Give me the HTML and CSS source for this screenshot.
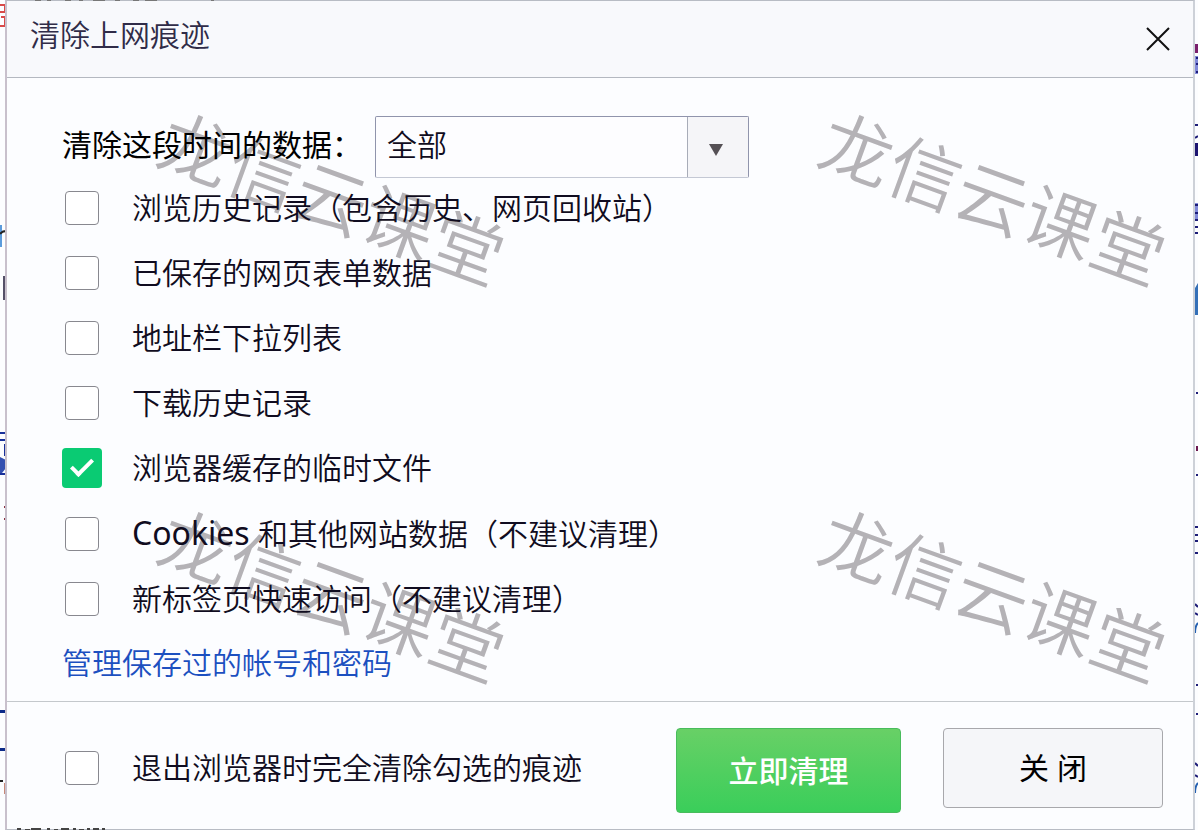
FILE: index.html
```html
<!doctype html>
<html lang="zh-CN">
  <head>
    <meta charset="UTF-8" />
    <meta name="viewport" content="width=device-width, initial-scale=1.0" />
    <title>清除上网痕迹</title>
    <link rel="stylesheet" href="styles.css" />
  </head>
  <body>
    <!-- 对话框后面露出的页面边缘 -->
    <svg class="edge edge-left" width="6" height="830" viewBox="0 0 6 830" aria-hidden="true">
      <path d="M0 5h5M5 5v7M0 12h5M1 17h4v9H0" fill="none" stroke="#d94a4a" stroke-width="2" />
      <path d="M0 225h2v22H0z" fill="#5b9bdc" />
      <path d="M0 234q2-3 6-3" fill="none" stroke="#222" stroke-width="2" />
      <path d="M3 276h2v24H3z" fill="#555068" />
      <path d="M0 433h6M0 440h6M5 444v12M0 474h6" fill="none" stroke="#18309a" stroke-width="2" />
      <path d="M0 457l6 3v8l-4 5H0z" fill="#3450b0" />
      <path d="M4 506h2v2H4zM4 518h2v2H4z" fill="#8a3040" />
      <path d="M0 710h6v3H0zM0 748h6v3H0z" fill="#0c2a88" />
      <path d="M0 780h3v2H0z" fill="#222" />
      <path d="M4 783h2v11H4z" fill="#c88878" />
    </svg>

    <main class="dialog" role="dialog" aria-labelledby="title">
      <header class="dialog-header">
        <h1 id="title">清除上网痕迹</h1>
        <button class="close-btn" type="button" aria-label="关闭">
          <svg width="24" height="24" viewBox="0 0 24 24">
            <path d="M1 1L23 23M23 1L1 23" fill="none" stroke="#111" stroke-width="2" />
          </svg>
        </button>
      </header>

      <form class="dialog-body">
        <div class="range">
          <label for="range">清除这段时间的数据：</label>
          <div class="select-box">
            <select id="range">
              <option>全部</option>
            </select>
            <span class="select-arrow">
              <svg width="14" height="12" viewBox="0 0 14 12">
                <path d="M0 0H14L7 12z" fill="#555055" />
              </svg>
            </span>
          </div>
        </div>

        <div class="options">
          <label class="check"><input type="checkbox" />浏览历史记录（包含历史、网页回收站）</label>
          <label class="check"><input type="checkbox" />已保存的网页表单数据</label>
          <label class="check"><input type="checkbox" />地址栏下拉列表</label>
          <label class="check"><input type="checkbox" />下载历史记录</label>
          <label class="check"><input type="checkbox" checked />浏览器缓存的临时文件</label>
          <label class="check"><input type="checkbox" /><span><span class="latin">Cookies </span>和其他网站数据（不建议清理）</span></label>
          <label class="check"><input type="checkbox" />新标签页快速访问（不建议清理）</label>
        </div>

        <a class="link" href="#">管理保存过的帐号和密码</a>
      </form>

      <footer class="dialog-footer">
        <label class="check"><input type="checkbox" />退出浏览器时完全清除勾选的痕迹</label>
        <div class="actions">
          <button class="btn btn-primary" type="button">立即清理</button>
          <button class="btn" type="button">关 闭</button>
        </div>
      </footer>

      <!-- 水印 -->
      <div class="watermarks" aria-hidden="true">
        <span>龙信云课堂</span>
        <span>龙信云课堂</span>
        <span>龙信云课堂</span>
        <span>龙信云课堂</span>
      </div>

      <svg class="trace trace-top" width="200" height="1" viewBox="0 0 200 1" aria-hidden="true">
        <path d="M20 0h6v1h-6zM32 0h4v1h-4zM50 0h6v1h-6zM64 0h4v1h-4zM78 0h12v1H78zM100 0h5v1h-5zM118 0h6v1h-6zM130 0h12v1h-12zM196 0h3v1h-3z" fill="#777" />
      </svg>
      <svg class="trace trace-bottom" width="96" height="2" viewBox="0 0 96 2" aria-hidden="true">
        <path d="M6 0h4v2H6zM14 1h5v1h-5zM20 0h10v2H20zM36 0h3v2h-3zM43 1h4v1h-4zM50 0h8v2h-8zM62 0h3v2h-3zM68 1h5v1h-5zM76 0h3v2h-3zM82 0h6v2h-6zM91 0h3v2h-3z" fill="#444" />
      </svg>
    </main>

    <svg class="edge edge-right" width="3" height="830" viewBox="0 0 3 830" aria-hidden="true">
      <path d="M0 44h3v9H0z" fill="#7a1f6c" />
      <path d="M0 56h3v18H0zM0 203h3v18H0z" fill="#8088d8" />
      <path d="M1 58h2M1 64h2M1 72h2M0 125h3M0 138l3-2M0 205h3M0 213h3M0 220h3M0 227h3M0 233h3M1 393h2M1 475h2M0 527h3M0 535h3M0 541h3M0 553h3M0 604l3 3M0 613l3 2M1 685h2M1 714h2M0 763l3 3M0 775l3 2" fill="none" stroke="#1c1c78" stroke-width="2" />
      <path d="M0 143h3v13H0z" fill="#1c1470" />
      <path d="M0 288l3-5v32H0z" fill="#3470b8" />
      <path d="M1 446h2v5H1z" fill="#6c1850" />
      <path d="M0 633q0-7 3-10M0 793q0-7 3-10" fill="none" stroke="#2460b0" stroke-width="2" />
    </svg>
  </body>
</html>
```
FILE: styles.css
```css
* {
  box-sizing: border-box;
}

body {
  display: flex;
  min-height: 100vh;
  margin: 0;
  overflow: hidden;
  background: #fcfdff;
  color: #100c20;
  font-family: 'Noto Sans', 'Noto Sans CJK SC', sans-serif;
  font-size: 30px;
  font-weight: 350;
  line-height: 40px;
}

button,
select {
  font: inherit;
  color: inherit;
}

.edge {
  flex: none;
}

.edge-left {
  margin-right: -1px;
}

.dialog {
  position: relative;
  z-index: 0;
  flex: 1;
  display: flex;
  flex-direction: column;
  border: 1px solid #b8bcc4;
  border-left: 2px solid #c8c0cc;
  border-right: 2px solid #cdd1d8;
  background: #fcfdff;
}

.dialog-header {
  display: flex;
  align-items: center;
  justify-content: space-between;
  height: 77px;
  padding: 0 23px 8px;
  border-bottom: 1px solid #b4b8c0;
  background: #f8f9fc;
}

.dialog-header h1 {
  margin: 0;
  color: #302c48;
  font-size: 30px;
  font-weight: 350;
}

.close-btn {
  display: flex;
  margin-top: 8px;
  padding: 0;
  border: none;
  background: none;
  cursor: pointer;
}

.dialog-body {
  flex: 1;
  padding: 38px 55px 16px;
}

.range {
  display: flex;
  align-items: center;
  gap: 13px;
}

.range label {
  padding-bottom: 4px;
  color: #000;
  font-weight: 400;
}

.select-box {
  position: relative;
  width: 374px;
  height: 62px;
}

.select-box select {
  width: 100%;
  height: 100%;
  padding: 0 72px 4px 11px;
  border: 1px solid #9094ac;
  border-bottom-color: #c4c8d4;
  border-radius: 2px;
  background: #fdfdff;
  appearance: none;
}

.select-arrow {
  position: absolute;
  top: 1px;
  right: 1px;
  bottom: 1px;
  width: 61px;
  display: flex;
  align-items: center;
  justify-content: center;
  padding: 6px 4px 0 0;
  border-left: 1px solid #a8acb8;
  background: #f5f5f8;
  pointer-events: none;
}

.options {
  display: flex;
  flex-direction: column;
  gap: 25px;
  margin-top: 10px;
}

.check {
  display: flex;
  align-items: center;
  gap: 30px;
}

.check input {
  position: relative;
  flex: none;
  width: 34px;
  height: 34px;
  margin: 0 3px;
  border: 1px solid #88888f;
  border-radius: 4px;
  background: #fff;
  appearance: none;
}

.check input:checked {
  width: 40px;
  height: 40px;
  margin: 0;
  border: none;
  background: #0acb73;
}

.check input:checked::after {
  content: '';
  position: absolute;
  top: 6px;
  left: 14px;
  width: 8px;
  height: 18px;
  border: solid #fff;
  border-width: 0 4px 4px 0;
  transform: rotate(45deg);
}

.latin {
  font-size: 32px;
  font-weight: 400;
  white-space: pre;
}

.link {
  display: inline-block;
  margin-top: 24px;
  color: #1c50c0;
  text-decoration: none;
}

.dialog-footer {
  display: flex;
  align-items: center;
  justify-content: space-between;
  height: 128px;
  padding: 4px 30px 0 55px;
  border-top: 1px solid #c4c8cc;
}

.actions {
  display: flex;
  align-items: flex-start;
  gap: 42px;
  margin-top: 6px;
}

.btn {
  width: 220px;
  height: 80px;
  border: 1px solid #a8a8ac;
  border-radius: 4px;
  background: #f5f6f9;
  color: #000;
  font-weight: 400;
  cursor: pointer;
}

.btn-primary {
  width: 225px;
  height: 85px;
  border-color: #48bc5c;
  background: linear-gradient(#68d066, #3ace5a);
  color: #fff;
  font-weight: 500;
}

.watermarks {
  position: absolute;
  inset: -2px 0 0 -5px;
  z-index: -1;
  display: grid;
  grid-template-columns: 661px 661px;
  grid-template-rows: 397px 397px;
  overflow: hidden;
  color: #b4b2b6;
  font-size: 72px;
  white-space: nowrap;
}

.watermarks span {
  place-self: center;
  transform: rotate(20deg);
}

.trace {
  position: absolute;
}

.trace-top {
  top: -1px;
  left: 8px;
}

.trace-bottom {
  bottom: -1px;
  left: 4px;
}
```
